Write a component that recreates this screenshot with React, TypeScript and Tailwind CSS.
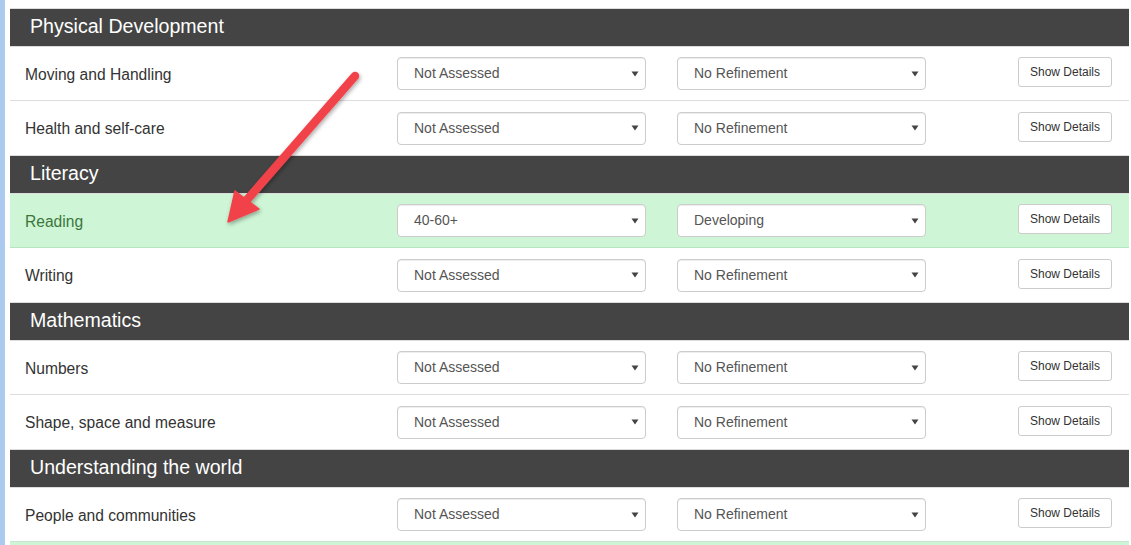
import React from "react";

type Row = { label: string; level: string; refine: string; success?: boolean };
type Section = { title: string; rows: Row[] };

const sections: Section[] = [
  {
    title: "Physical Development",
    rows: [
      { label: "Moving and Handling", level: "Not Assessed", refine: "No Refinement" },
      { label: "Health and self-care", level: "Not Assessed", refine: "No Refinement" },
    ],
  },
  {
    title: "Literacy",
    rows: [
      { label: "Reading", level: "40-60+", refine: "Developing", success: true },
      { label: "Writing", level: "Not Assessed", refine: "No Refinement" },
    ],
  },
  {
    title: "Mathematics",
    rows: [
      { label: "Numbers", level: "Not Assessed", refine: "No Refinement" },
      { label: "Shape, space and measure", level: "Not Assessed", refine: "No Refinement" },
    ],
  },
  {
    title: "Understanding the world",
    rows: [{ label: "People and communities", level: "Not Assessed", refine: "No Refinement" }],
  },
];

function Caret() {
  return (
    <svg width="8" height="6" viewBox="0 0 8 6" className="shrink-0">
      <polygon points="0.5,0.5 7.5,0.5 4,5.5" fill="#444" />
    </svg>
  );
}

function Select({ value }: { value: string }) {
  return (
    <div className="flex h-[33px] w-[249px] shrink-0 items-center justify-between rounded-[4px] border border-[#cccccc] bg-white pl-[16px] pr-[6px] text-[14px] text-[#555555] shadow-[inset_0_1px_1px_rgba(0,0,0,0.075)]">
      <span>{value}</span>
      <Caret />
    </div>
  );
}

function DataRow({ row, h, borderColor }: { row: Row; h: string; borderColor: string }) {
  return (
    <div
      className={`flex items-center border-t ${borderColor} ${h} ${row.success ? "bg-[#cef6d6]" : "bg-white"}`}
    >
      <div
        className={`mt-[2px] w-[387px] shrink-0 pl-[15px] text-[15.6px] ${row.success ? "text-[#3c763d]" : "text-[#333333]"}`}
      >
        {row.label}
      </div>
      <Select value={row.level} />
      <div className="w-[31px] shrink-0" />
      <Select value={row.refine} />
      <div className="flex flex-1 justify-end pr-[17px]">
        <button className="mb-[3px] h-[30px] w-[94px] rounded-[3px] border border-[#cccccc] bg-white text-[12px] text-[#333333]">
          Show Details
        </button>
      </div>
    </div>
  );
}

export default function App() {
  let prevSuccess = false;
  return (
    <div
      className="relative flex h-[545px] w-[1131px] overflow-hidden bg-white"
      style={{ fontFamily: '"Liberation Sans", Arial, sans-serif' }}
    >
      <div className="h-full w-[5px] shrink-0 bg-[#acc9ef]" />
      <div className="w-[5px] shrink-0" />
      <div className="flex w-[1119px] shrink-0 flex-col pt-[8px]">
        {sections.map((s) => (
          <div key={s.title} className="flex flex-col">
            <div className="flex h-[38px] items-center border-t border-[#dddddd] bg-[#444444] pb-[1px] pl-[20px] text-[19.6px] text-white">
              {(() => {
                prevSuccess = false;
                return s.title;
              })()}
            </div>
            {s.rows.map((r, i) => {
              const bc = prevSuccess ? "border-[#b4e6bf]" : "border-[#dddddd]";
              prevSuccess = !!r.success;
              return <DataRow key={r.label} row={r} h={i === 0 ? "h-[54px]" : "h-[55px]"} borderColor={bc} />;
            })}
          </div>
        ))}
        <div className="h-[10px] border-t border-[#c8e6cf] bg-[#cef6d6]" />
      </div>
      <svg className="pointer-events-none absolute left-0 top-0" width="1131" height="545">
        <defs>
          <filter id="sh" x="-50%" y="-50%" width="200%" height="200%">
            <feDropShadow dx="1" dy="2" stdDeviation="2" floodColor="#000" floodOpacity="0.35" />
          </filter>
        </defs>
        <g filter="url(#sh)">
          <line x1="355" y1="76" x2="246" y2="201" stroke="#f2434a" strokeWidth="8.5" strokeLinecap="round" />
          <polygon points="228,222 235,191 259,209" fill="#f2434a" stroke="#f2434a" strokeWidth="1.5" strokeLinejoin="round" />
        </g>
      </svg>
    </div>
  );
}
